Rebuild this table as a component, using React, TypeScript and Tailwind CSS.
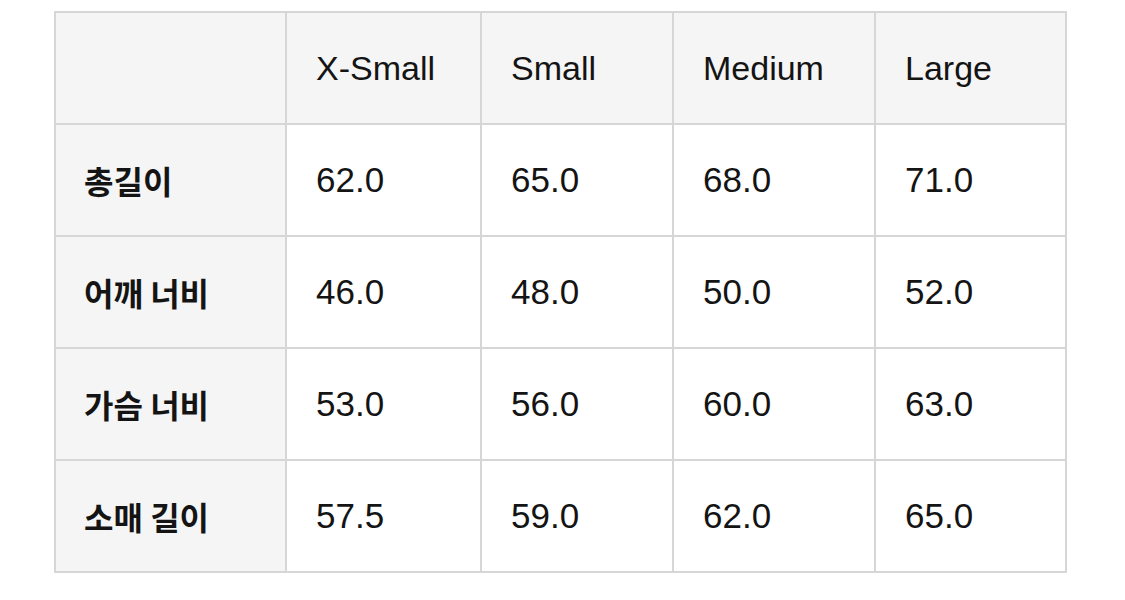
import React from "react";

const sizes = ["X-Small", "Small", "Medium", "Large"];

const rows = [
  { label: "총길이", values: ["62.0", "65.0", "68.0", "71.0"] },
  { label: "어깨 너비", values: ["46.0", "48.0", "50.0", "52.0"] },
  { label: "가슴 너비", values: ["53.0", "56.0", "60.0", "63.0"] },
  { label: "소매 길이", values: ["57.5", "59.0", "62.0", "65.0"] },
];

export default function App() {
  return (
    <div className="w-[1125px] h-[600px] bg-white pt-[11px] pl-[54px]">
      <div
        className="grid grid-cols-[229px_193px_190px_200px_189px] auto-rows-[110px] gap-[2px] p-[2px] bg-[#d6d6d6] w-fit text-[#141414]"
        style={{ fontFamily: '"Liberation Sans", "Noto Sans CJK KR", sans-serif' }}
      >
        {/* header */}
        <div className="bg-[#f5f5f5]" />
        {sizes.map((s) => (
          <div key={s} className="bg-[#f5f5f5] flex items-center pl-[29px] text-[34px]">
            {s}
          </div>
        ))}

        {rows.map((row) => (
          <React.Fragment key={row.label}>
            <div
              className="bg-[#f5f5f5] flex items-center pl-[28px] text-[32px] font-bold"
              style={{ fontFamily: '"Noto Sans CJK KR", sans-serif' }}
            >
              {row.label}
            </div>
            {row.values.map((v, i) => (
              <div key={i} className="bg-white flex items-center pl-[29px] text-[35px]">
                {v}
              </div>
            ))}
          </React.Fragment>
        ))}
      </div>
    </div>
  );
}
